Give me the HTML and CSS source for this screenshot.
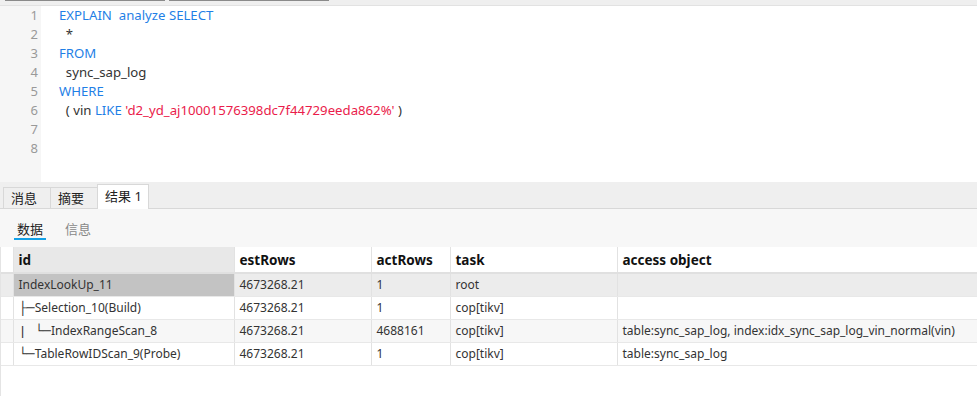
FILE: index.html
```html
<!DOCTYPE html>
<html lang="zh-CN">
<head>
  <meta charset="UTF-8" />
  <title>Query Result</title>
  <link rel="stylesheet" href="styles.css">
</head>
<body>
  <!-- top strip (scrollbars of the editor tabs) -->
  <div class="top-strip">
    <span class="strip-bar"></span>
    <span class="strip-bar"></span>
  </div>

  <!-- SQL editor -->
  <div class="editor">
    <div class="gutter">
      <div>1</div><div>2</div><div>3</div><div>4</div>
      <div>5</div><div>6</div><div>7</div><div>8</div>
    </div>
    <div class="code">
      <div><span class="kw">EXPLAIN</span>&nbsp; <span class="kw">analyze</span> <span class="kw">SELECT</span></div>
      <div>&nbsp;&nbsp;*</div>
      <div><span class="kw">FROM</span></div>
      <div>&nbsp;&nbsp;sync_sap_log</div>
      <div><span class="kw">WHERE</span></div>
      <div>&nbsp;&nbsp;( vin <span class="kw">LIKE</span> <span class="str">'d2_yd_aj10001576398dc7f44729eeda862%'</span> )</div>
      <div>&nbsp;</div>
      <div>&nbsp;</div>
    </div>
  </div>

  <!-- result tabs -->
  <div class="tabbar">
    <div class="tab">消息</div>
    <div class="tab">摘要</div>
    <div class="tab active">结果 1</div>
  </div>

  <div class="subtabs">
    <span class="subtab current">数据</span>
    <span class="subtab">信息</span>
  </div>

  <div class="grid">
    <table>
      <thead>
        <tr>
          <th class="rowhead"></th>
          <th class="col-id">id</th>
          <th class="col-est">estRows</th>
          <th class="col-act">actRows</th>
          <th class="col-task">task</th>
          <th>access object</th>
        </tr>
      </thead>
      <tbody>
        <tr class="selected">
          <td class="rowhead"></td>
          <td class="cur">IndexLookUp_11</td>
          <td>4673268.21</td>
          <td>1</td>
          <td>root</td>
          <td></td>
        </tr>
        <tr>
          <td class="rowhead"></td>
          <td><span class="tree">├─</span>Selection_10(Build)</td>
          <td>4673268.21</td>
          <td>1</td>
          <td>cop[tikv]</td>
          <td></td>
        </tr>
        <tr class="alt">
          <td class="rowhead"></td>
          <td><span class="tree">|&nbsp;└─</span>IndexRangeScan_8</td>
          <td>4673268.21</td>
          <td>4688161</td>
          <td>cop[tikv]</td>
          <td>table:sync_sap_log, index:idx_sync_sap_log_vin_normal(vin)</td>
        </tr>
        <tr>
          <td class="rowhead"></td>
          <td><span class="tree">└─</span>TableRowIDScan_9(Probe)</td>
          <td>4673268.21</td>
          <td>1</td>
          <td>cop[tikv]</td>
          <td>table:sync_sap_log</td>
        </tr>
      </tbody>
    </table>
  </div>
</body>
</html>
```

FILE: styles.css
```css
* {
  box-sizing: border-box;
}

body {
  margin: 0;
  width: 977px;
  height: 396px;
  overflow: hidden;
  background: #fff;
  font-family: "Noto Sans", "Noto Sans CJK SC", sans-serif;
  font-size: 12px;
  color: #333;
}

/* Top strip */
.top-strip {
  height: 5px;
  background: #efefef;
  display: flex;
  gap: 4px;
  padding-left: 5px;
}

.strip-bar {
  width: 160px;
  height: 1px;
  background: #8a8a8a;
}

/* Editor */
.editor {
  height: 177px;
  display: flex;
  border-top: 1px solid #e2e2e2;
}

.gutter {
  width: 41px;
  background: #f6f6f6;
  color: #999;
  text-align: right;
  padding-right: 3px;
  font-size: 13px;
  line-height: 19px;
}

.code {
  padding-left: 18px;
  font-size: 13.2px;
  line-height: 19px;
  color: #333;
  white-space: nowrap;
}

.kw {
  color: #1f7fe6;
}

.str {
  color: #ea1c4b;
}

/* Result tabs */
.tabbar {
  height: 27px;
  background: #efefef;
  border-bottom: 1px solid #d8d8d8;
  padding-left: 3px;
  display: flex;
  align-items: flex-end;
}

.tab {
  width: 48px;
  height: 21px;
  padding: 0 0 0 7px;
  border: 1px solid #d8d8d8;
  border-bottom: none;
  margin-left: -1px;
  font-size: 13px;
  line-height: 20px;
  color: #222;
  background: #efefef;
  white-space: nowrap;
}

.tab:first-child {
  margin-left: 0;
}

.tab.active {
  width: 52px;
  height: 25px;
  margin-bottom: -1px;
  background: #fff;
  line-height: 22px;
}

/* Sub tabs */
.subtabs {
  height: 38px;
  background: #f7f7f7;
  padding-left: 14px;
  display: flex;
  gap: 16px;
}

.subtab {
  padding: 10px 3px 0;
  font-size: 13px;
  color: #888;
  height: 31px;
}

.subtab.current {
  color: #222;
  border-bottom: 2px solid #12a0e6;
}

/* Grid */
.grid {
  height: 149px;
  border-left: 1px solid #e4e4e4;
}

table {
  border-collapse: collapse;
  table-layout: fixed;
  width: 977px;
}

th, td {
  text-align: left;
  padding: 0 5px;
  border-right: 1px solid #e2e2e2;
  border-bottom: 1px solid #e8e8e8;
  white-space: nowrap;
  overflow: hidden;
}

th {
  height: 26px;
  font-weight: bold;
  color: #111;
  font-size: 13.5px;
  border-bottom: 2px solid #e0e0e0;
}

td {
  height: 23px;
}

.tree {
  font-family: "Liberation Mono", monospace;
  font-size: 13.5px;
}

.rowhead {
  width: 12px;
  padding: 0;
}

.col-id {
  width: 221px;
  background: #e8e8e8;
}

.col-est {
  width: 137px;
}

.col-act {
  width: 79px;
}

.col-task {
  width: 167px;
}

tr.selected td {
  background: #ececec;
}

tr.selected td.cur {
  background: #c3c3c3;
}

tr.alt td {
  background: #f7f7f7;
}
```
